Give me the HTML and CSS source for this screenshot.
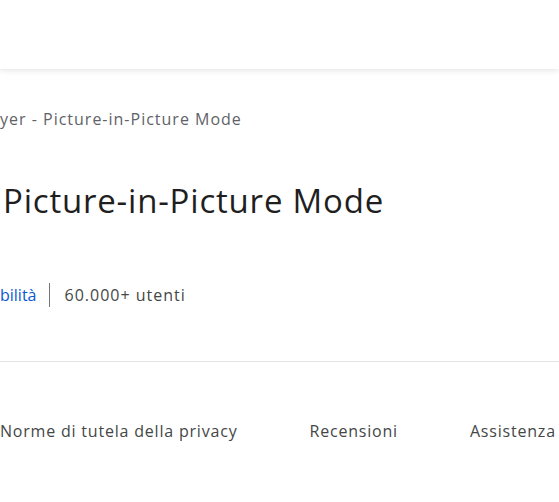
FILE: index.html
```html
<!DOCTYPE html>
<html lang="it">
<head>
<meta charset="utf-8">
<title>Picture-in-Picture Mode</title>
<link rel="stylesheet" href="styles.css">
</head>
<body>
<header class="topbar"></header>
<main class="content">
  <div class="crumbs">yer - Picture-in-Picture Mode</div>
  <h1 class="title">Picture-in-Picture Mode</h1>
  <div class="stats">
    <a class="category" href="#">bilità</a>
    <span class="sep"></span>
    <span class="users">60.000+ utenti</span>
  </div>
  <hr class="divider">
  <nav class="tabs">
    <a class="tab" href="#">Norme di tutela della privacy</a>
    <a class="tab" href="#">Recensioni</a>
    <a class="tab" href="#">Assistenza</a>
  </nav>
</main>
</body>
</html>
```
FILE: styles.css
```css
html, body {
  margin: 0;
  padding: 0;
  background: #ffffff;
  overflow: hidden;
}
body {
  font-family: "Open Sans", Roboto, "Liberation Sans", sans-serif;
  color: #1f1f1f;
}
.topbar {
  height: 69px;
  background: #ffffff;
  box-shadow: 0 1px 6px rgba(60, 64, 67, 0.16);
  position: relative;
  z-index: 1;
}
.content {
  padding-top: 40px;
}
.crumbs {
  font-size: 16px;
  line-height: 20px;
  letter-spacing: 1px;
  color: #5f6368;
  white-space: nowrap;
}
.title {
  margin: 52px 0 0 3px;
  font-size: 33px;
  line-height: 40px;
  font-weight: 400;
  letter-spacing: 0.8px;
  color: #1f1f1f;
  white-space: nowrap;
}
.stats {
  margin-top: 62px;
  display: flex;
  align-items: center;
  font-size: 16px;
  line-height: 24px;
  white-space: nowrap;
}
.category {
  color: #0b57d0;
  text-decoration: none;
  letter-spacing: 0;
}
.sep {
  width: 1px;
  height: 24px;
  background: #747775;
  margin: 0 15px 0 12px;
}
.users {
  color: #444746;
  letter-spacing: 1px;
}
.divider {
  margin: 54px 0 0;
  border: 0;
  height: 1px;
  background: #e3e3e3;
}
.tabs {
  margin-top: 57px;
  display: flex;
  gap: 72px;
  font-size: 16px;
  line-height: 24px;
  letter-spacing: 0.8px;
  white-space: nowrap;
}
.tab {
  color: #444746;
  text-decoration: none;
  font-weight: 500;
}
```
